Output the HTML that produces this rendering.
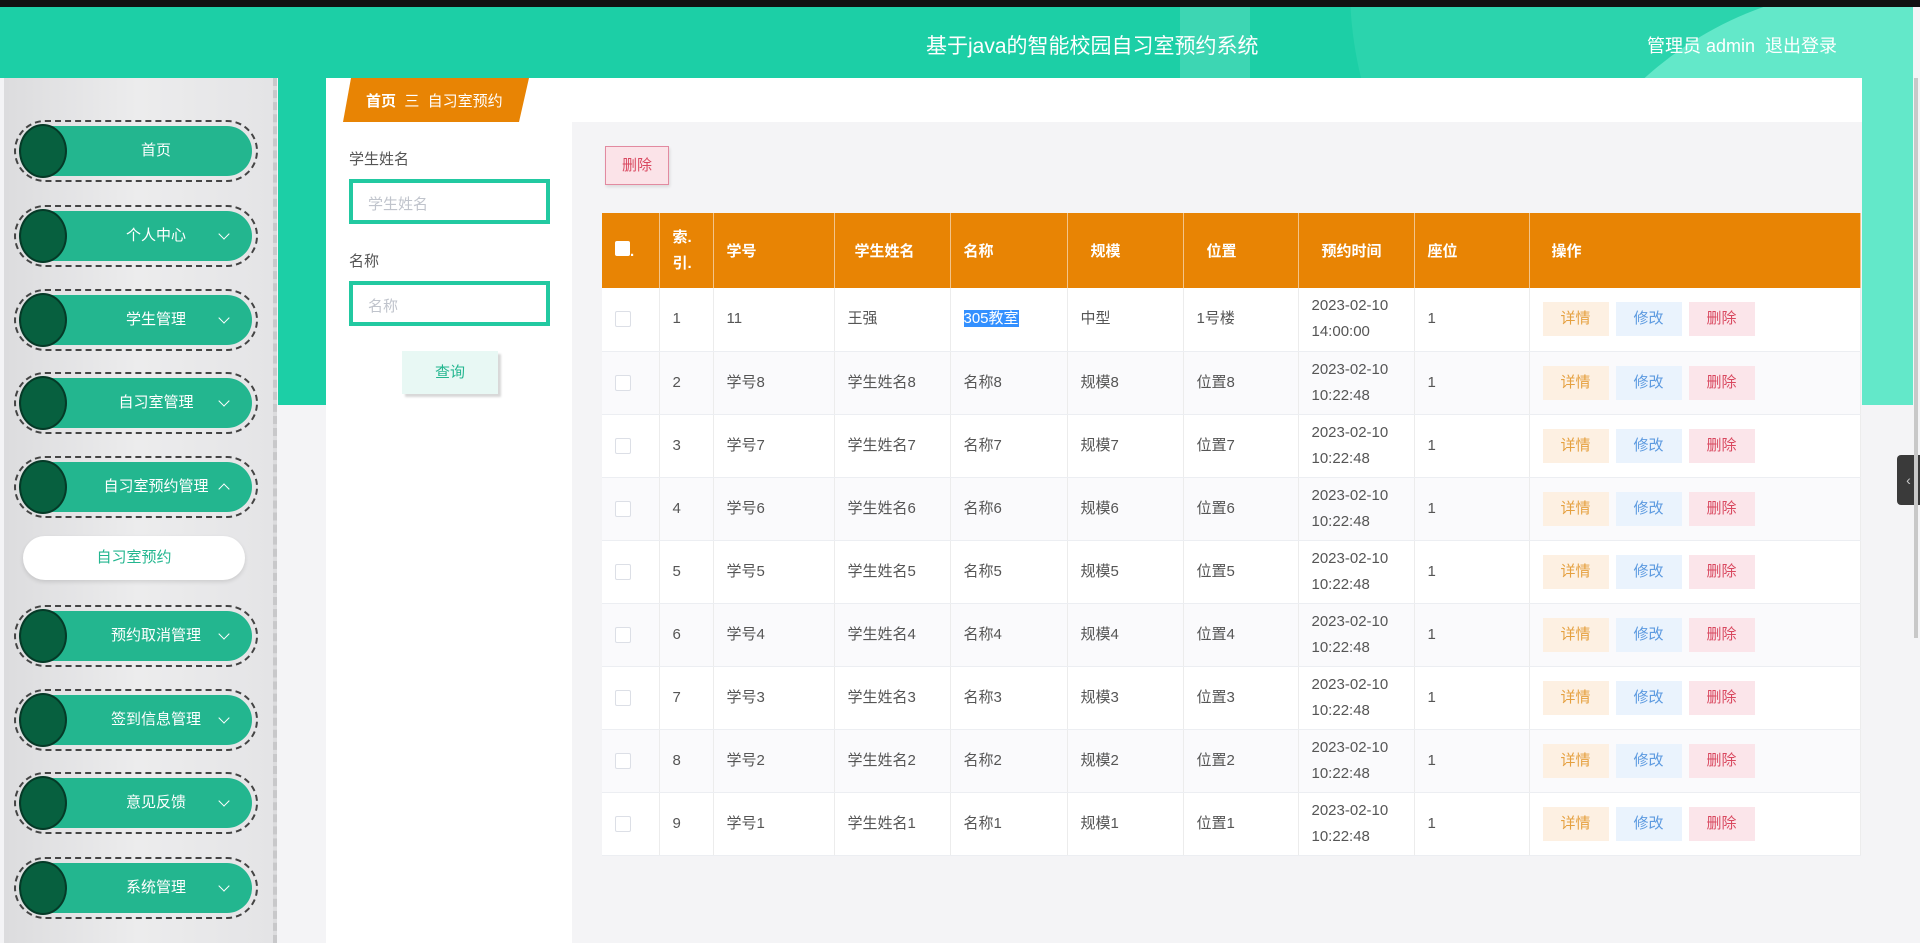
<!DOCTYPE html>
<html><head><meta charset="utf-8"><style>
*{margin:0;padding:0;box-sizing:border-box}
body{width:1920px;height:943px;overflow:hidden;background:#f4f4f6;font-family:"Liberation Sans","Noto Sans CJK SC",sans-serif;position:relative}
.a{position:absolute}
.top{left:0;top:0;width:1920px;height:7px;background:#111}
.hdr{left:0;top:7px;width:1913px;height:71px;background:#1ccfa6;overflow:hidden}
.band{left:278px;top:78px;width:1635px;height:327px;background:#1ccfa6;overflow:hidden}
.side{left:4px;top:78px;width:273px;height:865px;background:linear-gradient(90deg,#dcdcde,#ececed 50%,#e4e4e6);border-right:4px dashed #c8c8ca;overflow:hidden}
.item{position:absolute;left:10px;width:244px;height:62px;border:2px dashed #444;border-radius:31px}
.pill{position:absolute;left:4px;top:4px;right:4px;bottom:4px;border-radius:27px;background:#23b68f;color:#fff;font-size:15px;line-height:50px;text-align:center;padding-left:40px}
.dot{position:absolute;left:3px;top:2px;width:48px;height:54px;border-radius:50%;background:#07603f;border:2px solid #053a27}
.chev{position:absolute;right:24px;top:19px;width:8px;height:8px;border-right:1.5px solid #fff;border-bottom:1.5px solid #fff;transform:rotate(45deg)}
.up{top:23px;transform:rotate(-135deg)}
.panel{left:326px;top:78px;width:1536px;height:865px;background:#f4f4f6}
th,td{border-right:1px solid #ececec;text-align:left;padding-left:13px;font-size:15px}
th{color:#fff;background:#e88404;height:75px;font-weight:bold;border-right:1px solid #f3c48a}
td{color:#555;height:63px;border-bottom:1px solid #eceef2;line-height:26px}
tr:nth-child(odd) td{background:#fafafc}
table{border-collapse:collapse;position:absolute;left:602px;top:213px;width:1259px;background:#fff;table-layout:fixed}
.cb{display:inline-block;width:16px;height:16px;border:1px solid #dcdfe6;border-radius:2px;background:#fff;vertical-align:middle}
.b{display:inline-block;width:66px;height:34px;line-height:34px;text-align:center;font-size:15px;margin-right:7px}
.b1{background:#fdf0e2;color:#e5a03f}.b2{background:#eaf3fd;color:#5c9ae0}.b3{background:#fbe5ea;color:#d9485f}
</style></head><body>
<div class="a top"></div>
<div class="a hdr">
 <div class="a" style="left:1180px;top:-20px;width:70px;height:110px;background:rgba(255,255,255,.15)"></div>
 <div class="a" style="left:1350px;top:-400px;width:760px;height:760px;border-radius:50%;background:#2bd4ad"></div>
 <div class="a" style="left:1530px;top:-20px;width:700px;height:700px;border-radius:50%;background:#63e8c9"></div>
 <div class="a" style="left:926px;top:23px;color:#fff;font-size:21px">基于java的智能校园自习室预约系统</div>
 <div class="a" style="left:1647px;top:25px;color:#fff;font-size:18px">管理员 admin&nbsp;&nbsp;退出登录</div>
</div>
<div class="a band">
 <div class="a" style="left:1072px;top:-400px;width:760px;height:760px;border-radius:50%;background:#2bd4ad"></div>
 <div class="a" style="left:1252px;top:-85px;width:700px;height:700px;border-radius:50%;background:#63e8c9"></div>
</div>
<div class="a" style="left:1897px;top:455px;width:23px;height:50px;background:#3a3a3a;border-radius:4px 0 0 4px;color:#ccc;font-size:14px;line-height:50px;text-align:center">‹</div>
<div class="a" style="left:1914px;top:78px;width:4px;height:560px;background:#c8c8c8"></div>
<div class="a side">
 <div class="item" style="top:42px"><div class="pill">首页</div><div class="dot"></div></div>
 <div class="item" style="top:127px"><div class="pill">个人中心<span class="chev"></span></div><div class="dot"></div></div>
 <div class="item" style="top:211px"><div class="pill">学生管理<span class="chev"></span></div><div class="dot"></div></div>
 <div class="item" style="top:294px"><div class="pill">自习室管理<span class="chev"></span></div><div class="dot"></div></div>
 <div class="item" style="top:378px"><div class="pill">自习室预约管理<span class="chev up"></span></div><div class="dot"></div></div>
 <div class="a" style="left:19px;top:458px;width:222px;height:44px;border-radius:22px;background:#fff;box-shadow:0 2px 4px rgba(0,0,0,.12);color:#23b68f;font-size:15px;line-height:44px;text-align:center">自习室预约</div>
 <div class="item" style="top:527px"><div class="pill">预约取消管理<span class="chev"></span></div><div class="dot"></div></div>
 <div class="item" style="top:611px"><div class="pill">签到信息管理<span class="chev"></span></div><div class="dot"></div></div>
 <div class="item" style="top:694px"><div class="pill">意见反馈<span class="chev"></span></div><div class="dot"></div></div>
 <div class="item" style="top:779px"><div class="pill">系统管理<span class="chev"></span></div><div class="dot"></div></div>
</div>
<div class="a panel"></div>
<div class="a" style="left:326px;top:78px;width:1536px;height:44px;background:#fff"></div>
<div class="a" style="left:343px;top:78px;width:186px;height:44px;background:#e88404;clip-path:polygon(8px 0,100% 0,calc(100% - 10px) 100%,0 100%)"></div>
<div class="a" style="left:366px;top:90px;color:#fff;font-size:15px"><b>首页</b>&nbsp;&nbsp;三&nbsp;&nbsp;自习室预约</div>
<div class="a" style="left:326px;top:122px;width:246px;height:821px;background:#fff"></div>
<div class="a" style="left:349px;top:148px;color:#555;font-size:15px">学生姓名</div>
<div class="a" style="left:349px;top:179px;width:201px;height:45px;border:4px solid #22c9a1;background:#fff;color:#c0c4cc;font-size:15px;padding:10px 15px">学生姓名</div>
<div class="a" style="left:349px;top:250px;color:#555;font-size:15px">名称</div>
<div class="a" style="left:349px;top:281px;width:201px;height:45px;border:4px solid #22c9a1;background:#fff;color:#c0c4cc;font-size:15px;padding:10px 15px">名称</div>
<div class="a" style="left:402px;top:351px;width:96px;height:43px;background:#e8f8f4;box-shadow:3px 3px 2px #d8d8d8;color:#23b68f;font-size:15px;line-height:43px;text-align:center">查询</div>
<div class="a" style="left:605px;top:146px;width:64px;height:39px;background:#fbe3e8;border:1px solid #e28aa0;box-shadow:1px 2px 3px rgba(0,0,0,.1);color:#d9485f;font-size:15px;line-height:37px;text-align:center">删除</div>
<table>
<colgroup><col style="width:57px"><col style="width:54px"><col style="width:121px"><col style="width:116px"><col style="width:117px"><col style="width:116px"><col style="width:115px"><col style="width:116px"><col style="width:115px"><col></colgroup>
<tr><th><span style="display:inline-block;width:15px;height:15px;background:#fff;border-radius:2px"></span>.</th><th style="line-height:26px">索.<br>引.</th><th>学号</th><th style="padding-left:20px">学生姓名</th><th>名称</th><th style="padding-left:23px">规模</th><th style="padding-left:23px">位置</th><th style="padding-left:23px">预约时间</th><th>座位</th><th style="padding-left:22px">操作</th></tr>
<tr><td><span class="cb"></span></td><td>1</td><td>11</td><td>王强</td><td><span style="background:#3390ff;color:#fff">305教室</span></td><td>中型</td><td>1号楼</td><td>2023-02-10<br>14:00:00</td><td>1</td><td><span class="b b1">详情</span><span class="b b2">修改</span><span class="b b3">删除</span></td></tr>
<tr><td><span class="cb"></span></td><td>2</td><td>学号8</td><td>学生姓名8</td><td>名称8</td><td>规模8</td><td>位置8</td><td>2023-02-10<br>10:22:48</td><td>1</td><td><span class="b b1">详情</span><span class="b b2">修改</span><span class="b b3">删除</span></td></tr>
<tr><td><span class="cb"></span></td><td>3</td><td>学号7</td><td>学生姓名7</td><td>名称7</td><td>规模7</td><td>位置7</td><td>2023-02-10<br>10:22:48</td><td>1</td><td><span class="b b1">详情</span><span class="b b2">修改</span><span class="b b3">删除</span></td></tr>
<tr><td><span class="cb"></span></td><td>4</td><td>学号6</td><td>学生姓名6</td><td>名称6</td><td>规模6</td><td>位置6</td><td>2023-02-10<br>10:22:48</td><td>1</td><td><span class="b b1">详情</span><span class="b b2">修改</span><span class="b b3">删除</span></td></tr>
<tr><td><span class="cb"></span></td><td>5</td><td>学号5</td><td>学生姓名5</td><td>名称5</td><td>规模5</td><td>位置5</td><td>2023-02-10<br>10:22:48</td><td>1</td><td><span class="b b1">详情</span><span class="b b2">修改</span><span class="b b3">删除</span></td></tr>
<tr><td><span class="cb"></span></td><td>6</td><td>学号4</td><td>学生姓名4</td><td>名称4</td><td>规模4</td><td>位置4</td><td>2023-02-10<br>10:22:48</td><td>1</td><td><span class="b b1">详情</span><span class="b b2">修改</span><span class="b b3">删除</span></td></tr>
<tr><td><span class="cb"></span></td><td>7</td><td>学号3</td><td>学生姓名3</td><td>名称3</td><td>规模3</td><td>位置3</td><td>2023-02-10<br>10:22:48</td><td>1</td><td><span class="b b1">详情</span><span class="b b2">修改</span><span class="b b3">删除</span></td></tr>
<tr><td><span class="cb"></span></td><td>8</td><td>学号2</td><td>学生姓名2</td><td>名称2</td><td>规模2</td><td>位置2</td><td>2023-02-10<br>10:22:48</td><td>1</td><td><span class="b b1">详情</span><span class="b b2">修改</span><span class="b b3">删除</span></td></tr>
<tr><td><span class="cb"></span></td><td>9</td><td>学号1</td><td>学生姓名1</td><td>名称1</td><td>规模1</td><td>位置1</td><td>2023-02-10<br>10:22:48</td><td>1</td><td><span class="b b1">详情</span><span class="b b2">修改</span><span class="b b3">删除</span></td></tr>
</table>
</body></html>
